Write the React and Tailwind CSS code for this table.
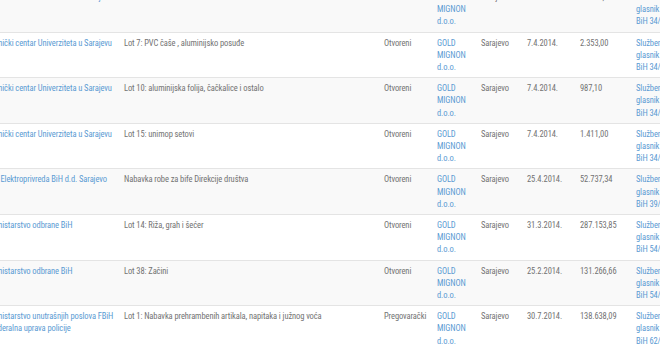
const rows = [
  { narucilac: ["Klinički centar Univerziteta u Sarajevu"], predmet: "Lot 6: Salvete i ubrusi", postupak: "Otvoreni", datum: "7.4.2014.", iznos: "14.240,00", glasnik: "34/14" },
  { narucilac: ["Klinički centar Univerziteta u Sarajevu"], predmet: "Lot 7: PVC čaše , aluminijsko posuđe", postupak: "Otvoreni", datum: "7.4.2014.", iznos: "2.353,00", glasnik: "34/14" },
  { narucilac: ["Klinički centar Univerziteta u Sarajevu"], predmet: "Lot 10: aluminijska folija, čačkalice i ostalo", postupak: "Otvoreni", datum: "7.4.2014.", iznos: "987,10", glasnik: "34/14" },
  { narucilac: ["Klinički centar Univerziteta u Sarajevu"], predmet: "Lot 15: unimop setovi", postupak: "Otvoreni", datum: "7.4.2014.", iznos: "1.411,00", glasnik: "34/14" },
  { narucilac: ["JP Elektroprivreda BiH d.d. Sarajevo"], predmet: "Nabavka robe za bife Direkcije društva", postupak: "Otvoreni", datum: "25.4.2014.", iznos: "52.737,34", glasnik: "39/14" },
  { narucilac: ["Ministarstvo odbrane BiH"], predmet: "Lot 14: Riža, grah i šećer", postupak: "Otvoreni", datum: "31.3.2014.", iznos: "287.153,85", glasnik: "54/14" },
  { narucilac: ["Ministarstvo odbrane BiH"], predmet: "Lot 38: Začini", postupak: "Otvoreni", datum: "25.2.2014.", iznos: "131.266,66", glasnik: "54/14" },
  { narucilac: ["Ministarstvo unutrašnjih poslova FBiH", "Federalna uprava policije"], predmet: "Lot 1: Nabavka prehrambenih artikala, napitaka i južnog voća", postupak: "Pregovarački", datum: "30.7.2014.", iznos: "138.638,09", glasnik: "62/14" },
];

const link = "text-[#5b9bd3]";
const cell = "px-[5px] py-[4px] align-top whitespace-nowrap";

function Lines({ items }) {
  return items.map((l, j) => <div key={j}>{l}</div>);
}

export default function App() {
  return (
    <div
      className="h-[350px] w-[660px] overflow-hidden bg-white text-[8.5px] leading-[12.2px] tracking-[-0.1px] text-[#737373] [font-stretch:condensed]"
      style={{ fontFamily: "Roboto, 'Liberation Sans', sans-serif" }}
    >
      <table className="-mt-[14px] -ml-[15px] w-[701px] table-fixed border-collapse">
        <colgroup>
          <col className="w-[134px]" />
          <col className="w-[260px]" />
          <col className="w-[53px]" />
          <col className="w-[44px]" />
          <col className="w-[46px]" />
          <col className="w-[53px]" />
          <col className="w-[56px]" />
          <col className="w-[55px]" />
        </colgroup>
        <tbody>
          {rows.map((r, i) => (
            <tr
              key={i}
              className={`border-t border-[#e4e4e4] ${i % 2 === 0 ? "bg-[#f9f9f9]" : "bg-white"}`}
            >
              <td className={`${cell} ${link}`}>
                <Lines items={r.narucilac} />
              </td>
              <td className={cell}>{r.predmet}</td>
              <td className={cell}>{r.postupak}</td>
              <td className={`${cell} ${link}`}>
                <Lines items={["GOLD", "MIGNON", "d.o.o."]} />
              </td>
              <td className={cell}>Sarajevo</td>
              <td className={cell}>{r.datum}</td>
              <td className={cell}>{r.iznos}</td>
              <td className={`${cell} ${link}`}>
                <Lines items={["Službeni", "glasnik", `BiH ${r.glasnik}`]} />
              </td>
            </tr>
          ))}
        </tbody>
      </table>
    </div>
  );
}
